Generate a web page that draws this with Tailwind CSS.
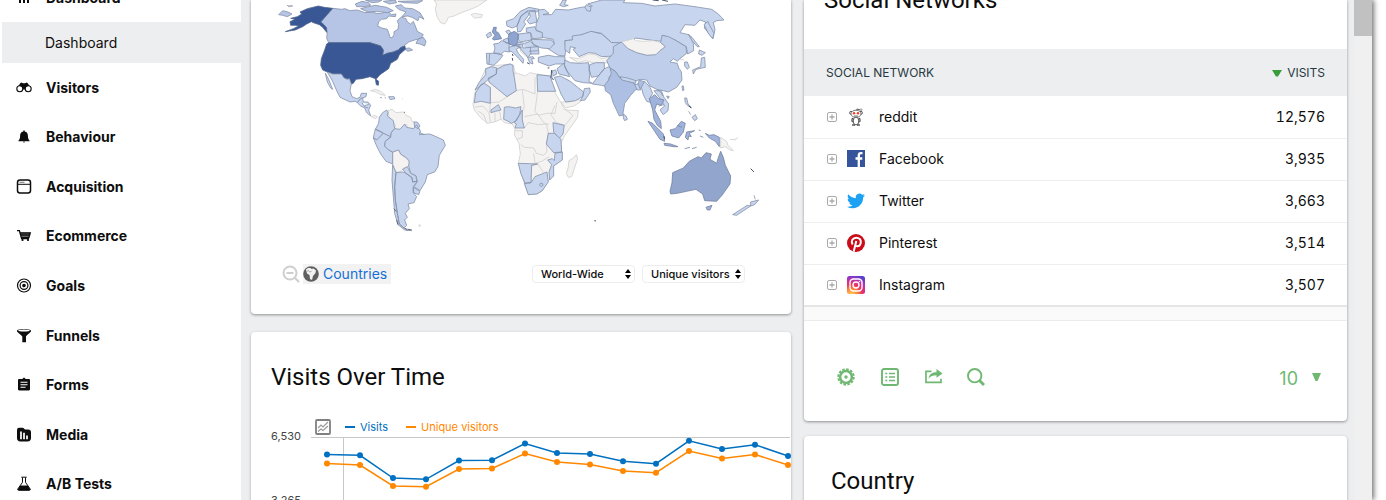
<!DOCTYPE html>
<html lang="en">
  <head>
    <meta charset="UTF-8" />
    <meta name="viewport" content="width=device-width, initial-scale=1" />
    <title>Dashboard - Web Analytics</title>
    <script src="https://cdn.jsdelivr.net/npm/@tailwindcss/browser@4"></script>
  </head>
  <body class="h-screen overflow-hidden bg-white pr-[14px] font-['Inter','Liberation_Sans',sans-serif] text-[#0d0d0d]">
    <div class="flex h-full bg-[#edeef0] shadow-[2px_0_5px_rgba(0,0,0,0.55)]">
      <!-- Sidebar -->
      <aside class="w-[241px] shrink-0 overflow-hidden bg-white">
        <nav class="-mt-[27px] text-sm font-bold" aria-label="Main">
          <a href="#" class="flex h-[49px] items-center gap-[14px] pl-4">
            <svg class="size-4" viewBox="0 0 16 16" fill="currentColor"><path d="M3 6h2v7H3zM7 3h2v10H7zM11 6h2v7h-2z" /></svg>
            Dashboard
          </a>
          <a href="#" class="ml-[2px] flex h-[41px] items-center bg-[#edeef0] pl-[43px] font-normal">Dashboard</a>
          <div class="grid h-[446px] auto-rows-fr">
            <a href="#" class="flex items-center gap-[14px] pl-4">
              <svg class="size-4" viewBox="0 0 16 16"><path d="M2.300 6.500 4 3.500 5.200 2.600 7 3.200h2l1.800-.6L12 3.500l1.700 3-3.200 3H5.500z" fill="#0d0d0d" /><g fill="#fff" stroke="#0d0d0d" stroke-width="1.100"><circle cx="3.800" cy="8.700" r="3" /><circle cx="12.200" cy="8.700" r="3" /></g><path d="M3.200 5.500 5 4l3 3.200L11 4l1.800 1.500-3.500 1.800L8.600 9H7.400l-.7-1.700z" fill="#0d0d0d" /></svg>
              Visitors
            </a>
            <a href="#" class="flex items-center gap-[14px] pl-4">
              <svg class="size-4" viewBox="0 0 16 16" fill="currentColor"><path d="M7.300 1.500h1.400v1c2.300.5 3.200 2.200 3.200 4.300 0 2.500.6 3.700 1.600 4.700v.8h-11v-.8c1-1 1.600-2.200 1.600-4.700 0-2.100.9-3.800 3.200-4.300zM6.800 12.800h2.400c-.2 1-2.200 1-2.400 0z" /></svg>
              Behaviour
            </a>
            <a href="#" class="flex items-center gap-[14px] pl-4">
              <svg class="size-4" viewBox="0 0 16 16" fill="none" stroke="currentColor"><rect x="1.500" y="1" width="13" height="13" rx="2.500" stroke-width="1.500" /><path d="M2 5.300h12" stroke-width="1" /><path d="M3.500 3.300h5" stroke="#888" stroke-width="1.200" /></svg>
              Acquisition
            </a>
            <a href="#" class="flex items-center gap-[14px] pl-4">
              <svg class="size-4" viewBox="0 0 16 16"><path d="M4.200 4.500H14l-1.200 5H5.500z" fill="#8a8a8a" /><path d="M1 2.700h2.400l2.200 7.800H13M4.300 5h10l-1.400 4.500H5.300M5 7h8.500" fill="none" stroke="#0d0d0d" stroke-width="1.300" /><circle cx="6.500" cy="12" r="1.100" /><circle cx="12" cy="12" r="1.100" /></svg>
              Ecommerce
            </a>
            <a href="#" class="flex items-center gap-[14px] pl-4">
              <svg class="size-4" viewBox="0 0 16 16" fill="none" stroke="currentColor" stroke-width="1.200"><circle cx="8" cy="7.500" r="6.500" /><circle cx="8" cy="7.500" r="3.900" /><circle cx="8" cy="7.500" r="1.200" fill="currentColor" /></svg>
              Goals
            </a>
            <a href="#" class="flex items-center gap-[14px] pl-4">
              <svg class="size-4" viewBox="0 0 16 16"><path d="M.9 2.700C1 .3 15 .3 15.100 2.700c0 1.700-4 4-5.100 5.800v5.800H6.300V8.500C5 6.700.9 4.400.9 2.700z" fill="#0d0d0d" /><ellipse cx="8" cy="2.600" rx="5.700" ry="1" fill="#fff" /></svg>
              Funnels
            </a>
            <a href="#" class="flex items-center gap-[14px] pl-4">
              <svg class="size-4" viewBox="0 0 16 16"><path d="M3.200 2h3L8 .6 9.800 2h3c.7 0 1.200.5 1.200 1.200v9c0 .7-.5 1.200-1.200 1.200H3.200c-.7 0-1.200-.5-1.200-1.200v-9C2 2.500 2.500 2 3.200 2z" fill="#0d0d0d" /><path d="M4.500 5.200h7M4.500 7.700h7M4.500 10.200h5" stroke="#fff" stroke-width="1.100" /></svg>
              Forms
            </a>
            <a href="#" class="flex items-center gap-[14px] pl-4">
              <svg class="size-4" viewBox="0 0 16 16"><path d="M3 .8h3.500c1.500 0 1.500 1.700 3 1.700H12c2.200 0 3 1.300 3 3v5.500c0 2.300-1.200 3.500-3.500 3.500h-7C2.200 14.500 1 13.300 1 11V4C1 2 1.500.8 3 .8z" fill="#0d0d0d" /><path d="M5 4.500v7.800M8 5.800v6.500M11 8.500v3.800" stroke="#fff" stroke-width="1.700" /></svg>
              Media
            </a>
            <a href="#" class="flex items-center gap-[14px] pl-4">
              <svg class="size-4" viewBox="0 0 16 16"><path d="M5.300 1.200h5.400M6.500 1.500v4.800L1.800 13c-.4.900.1 1.300.9 1.300h10.600c.8 0 1.300-.4.900-1.300L9.500 6.300V1.500" fill="none" stroke="#0d0d0d" /><path d="M4.300 9.500h7.400l2.500 3.800-.6 1H2.400l-.6-1z" fill="#0d0d0d" /></svg>
              A/B Tests
            </a>
          </div>
        </nav>
      </aside>

      <!-- Widgets -->
      <main class="grid min-w-0 flex-1 grid-cols-[540fr_543fr] items-start gap-[13px] pr-[7px] pl-[10px]">
        <div class="flex flex-col gap-[18px]">
          <section class="rounded-b-sm bg-white pb-[31px] shadow-[0_1px_3px_rgba(0,0,0,0.4)]">
            <svg class="block w-full" viewBox="251 0 540 240" role="img" aria-label="Visitor map" stroke-linejoin="round">
              <!-- Americas -->
              <g transform="translate(270 0) scale(.3333)" stroke="#8490a8" stroke-width="2.400" fill="#c8d5ee">
                <g fill="#f4f3f2" stroke="#cfcfcf">
                  <path d="M492 0l8 12-4 16 6 24 10 16 12 4 6-8 5-12 18-4 12-6 20-8 22-8 18-8 26-18z" />
                  <path d="M354 332l12-4 12 10 22-2 8 10 14 6 4 12 12 4 2 16-12 2-12 2-6-14-8 2-8 16-20 2 2-20-18-14zM368 456l18-6 6 14 18 12 8 10-2 14-16 4-8 12-14 0-10-24z" />
                  <path d="M302 272l14-4 16 6 14 12-14-2-14-8zM304 350l8-4 10 4-4 6-6-2zM448 674l4 2-2 4-4-2zM396 296l3 1" />
                </g>
                <g fill="#b6c5e5">
                  <path d="M188 25L215 28 225 26 240 32 262 30 285 38 310 36 318 40 335 40 344 35 356 35 364 44 378 42 376 50 356 48 350 56 334 58 326 66 323 78 335 84 352 88 356 98 360 112 366 114 372 104 372 95 384 88 386 74 382 62 394 51 408 56 412 66 422 72 430 64 436 78 442 94 460 104 452 116 434 120 416 126 402 138 385 150 368 156 352 160 338 166 340 150 332 138 300 128 176 128 170 115 172 95 152 66z" />
                  <path d="M256 12l20-8 20 4 6 8-20 4-22 0zM272 26l24-6 20-4 34 6 20 10-18 6-30-4-28 2zM286 0l20 8 20-2 10-6zM340 4l18 8 22-4-4-8zM376 18l18-4 10 10 24 2 22 12 12 20-14-8-4 12-18-10-12-4-18 2 12-14-22-8zM384 4l20 4 38 2 16-8zM440 126l6-10 14-4 8 12-4 14-14-6-12-2zM402 146l16-2 10 6-14 4zM26 44l12-12 16 4 12 6-14 8-14-4z" />
                </g>
                <g fill="#385794" stroke="#52678f">
                  <path d="M60 65L75 58 62 55 82 50 95 42 90 36 112 26 145 18 163 22 188 25 152 66 162 74 170 84 170 97 158 82 148 74 130 68 124 65 110 72 98 80 76 90 46 95 70 86 86 78 76 76 62 76z" />
                  <path d="M176 128L300 128 332 138 340 150 338 166 352 160 370 156 385 150 393 142 405 138 406 148 388 164 382 178 362 190 356 206 330 224 318 238 326 244 325 256 319 254 316 236 300 230 276 236 258 238 250 250 244 252 238 236 232 238 222 234 214 222 188 222 172 216 158 210 152 196 154 176 164 150 170 132z" />
                </g>
                <path d="M172 216L188 222 214 222 222 234 232 238 238 236 244 252 240 272 246 290 260 296 270 292 274 280 290 280 288 290 272 296 262 308 256 304 240 306 210 292 202 276 186 240zM166 220l10 18 12 30-6-4-10-18z" />
                <path d="M262 308l10-12 6-2 2 12 14 0 8 10-6 14 6 18-12-10-6-14-12-6zM276 308l6 10 16-6M282 320l12 4M330 292l6 2M356 290h16l3 6-14 3zM344 292l4 3" />
                <path d="M350 330l4 8-2 10 18 14 4 24-10 12-2 14-22-12-10-6-14-6 10-18 2-18 10-14zM316 388l14 6 10 6-12 12-8 8-10-8z" />
                <path d="M310 414l10 6 8-8 12-12 22 10-16 14-2 14 12 12 12 6v36l-20-8-16-22-14-28z" />
                <path d="M364 398L374 386 390 388 404 372 410 382 430 386 440 374 452 394 448 404 480 402 494 408 520 420 526 436 508 466 504 500 494 516 472 524 466 546 450 572 432 560 442 544 438 528 422 520 416 498 418 484 410 474 392 462 386 450 368 456 356 450 344 438 346 424 362 412zM432 366h10l8 12-6 8-10-6zM448 398l16 6" />
                <path d="M398 508l14-8 10 20 16 8 2 16-12 2-2-14-18-12zM378 518L398 516 408 520 426 534 428 546 442 544 430 560 430 578 440 590 432 608 414 612 418 626 406 640 412 652 404 660 410 676 402 684 388 672 382 640 376 600 374 560zM368 494L378 518 374 560 376 600 382 640 388 672 402 684 424 692 404 690 384 674 374 640 370 590 366 540zM430 562l20 12-4 10-16-6z" />
                <path d="M58 18l10 0M52 16l6 4M402 336l3 2M380 660l4 14M372 626l6 8M404 684l8 8M414 688l12 2" stroke="#46526c" />
              </g>

              <!-- Europe, Africa, Middle East -->
              <g transform="translate(455 0) scale(.3333)" stroke="#8490a8" stroke-width="2.400" fill="#c8d5ee">
                <g fill="#f4f3f2" stroke="#cfcfcf">
                  <path d="M48 44l10-4 24 4-2 8-22 2zM92 206L110 198 166 192 176 196 180 218 212 228 224 218 246 222 286 228 290 250 300 278 318 308 330 330 370 332 368 352 345 384 328 408 318 430 322 478 296 498 294 528 276 548 262 572 246 582 220 584 208 550 190 490 196 462 192 430 178 404 180 388 172 372 148 368 138 358 118 366 96 370 74 350 58 330 54 312 60 276z" />
                  <path d="M364 464l4 12-10 30-8 24-10 2-6-12 6-18 2-20 14-8zM318 306l24 0 30-8 4 8-20 12-24 6-10-12zM344 172l26 4 30-14 20 2 20 12 30-6 10 8-20 10-40 2-30-8-20 6zM196 144l26 20-8 6-18-16z" />
                  <path fill="none" d="M176 230l4-12M106 262v46l26-2 22-14 30-20 20-4 36 14v-50M202 270l6 50-4 12M248 274l-8 60 10 12 26-6 24 0 6-34M106 310l-2 28M58 322l26-4 18 20 4 28M70 334l16 10 10 26M120 338v28M134 334l4 26M208 350l40-8 18 26 16 6M208 384l12-16 30 6 24-2 6 28-6 32 2 24-10 10-22-6-8-16-28-2-10-8M180 392l22 0 0 20-16 6M236 460l4 30 20-6 22-14M228 548l0-50 20-6 18 26M300 316l-12 28 16 24 26 8 24-30-26-20" />
                </g>
                <!-- Russia and Kazakhstan -->
                <path d="M250 30l18-2 14 12-18 4 26 0 12-16 38 2 38-8 34-4-14-6 42-12h70l-5 8 55 2 40 8 60-6 60 8 50 8 20 14 17 18-22 2-10 6 5 20-6 28-14-18-12-14 4-18-17-6-15 16-30-2-15 24 27 6 13 26 1 22-18 10-4-22-34-20-35-14-5 18-20-2-60-8-5 10-35 6-30-2-30-28-30-5-35 11-25 14-20 2 2 28-2 18-20-2-25-16-15-10 28-8-3-14-33-6-4-16-16-6 2-20 8-20z" />
                <path d="M330 122l22-2 0-12 28-4 28-10 32 8 30 26 26 0-16 18-2 22-38 2-20-10-20-2-28 12-18-22 8-4-16-4-2 20-14-10zM456 184l30-16 14 20-26 8z" />
                <path d="M314 16l10-16 10 0-6 14 12 2-14 4zM390 22l4-8 14 8-2 12-10-2z" />
                <!-- Nordics and continental Europe -->
                <path d="M154 64l22-8 20-22 26-12 30 6-6 8-28-4-20 16-12 30-14 6-16-6zM186 78l12-30 20-14 4 10-16 22 6 6-14 22-10 2zM222 34l18-4 6 36-22 6-8-10 10-12zM152 94l10-4 6 8-8 6zM214 84l26-4 4 12 18 6 0 16-30 2-4-16-14-4z" />
                <path d="M94 104l12-8 4 10-12 8zM116 132l14-2 10-8 22 8 2 26-16-2-12 10-20-6 4-14zM94 160l36 0 14 6-14 18-14 12-20-4zM104 162l-2 30M144 120l14-6 6 14-10 2z" />
                <path d="M190 102l36-4 4 22-34 6-6-8zM228 118l62 2 8 12-14 14-24-2-24-8zM162 142l26-8 8 6-12 8 6 12 16 18-2 12-12-14-20-20-10-4zM188 126l20 4 18-6 12 10 12 6 2 22-26 0-6 10 14-2 4 6-8 0 4 16-10-4-8-20-24-26-10-10zM202 132l2 12 22-2 2 22M176 132l24 2M180 136l20 8M224 142l24-2M222 154l28-2" />
                <path d="M250 172l30-6 22 4 28 0 0 22-28 0-20 6-32-12z" />
                <!-- Middle East and South Asia -->
                <path d="M306 206l20-16 18 40-32-8zM292 212l10-2 4 12-12 6zM298 232l18-4 30 16 22 18 18 14-4 14-20 12-30 4-14-24zM388 266l16-2 2 12-16 24-14 2 8-14zM330 180l16 8 26 2 28-2 5 30-3 26 10 6-27-2-25-6-25-30-7-14zM404 194l18-6 26 0 0 18-18 22-20 4-8-20zM430 228l18-22 24-10 6 18-16 18-2 30-20-6-28-4z" />
                <!-- Africa -->
                <path d="M92 206l18-6 16 4-2 18-24 16-16 14-24 18 12-22 20-24zM78 254l10-4 18 12v48l-28-6-20 4 4-30zM124 208l24-12 18-4 8 4 0 16 4 20 6 40-28 18-54-44-2-12 24-12zM246 224l40 4 4 14 12 32h-54z" />
                <path d="M148 322l12-2 22 4 16-4-4 24-10 18-14 8-14-8-10-4zM194 344l8-14 0 30 6 24h-28l4-12-6-4zM108 330l22-16 8 16-16 4-14 4zM294 368l34 8-4 26-12 14-16-20z" />
                <path d="M280 400l18 0 20 18 2 38-24 2-22-26zM300 460l22-4v24l-26 18v30l-12 12-2-24 8-22-12-14 14-4 6 6zM190 490l58 2-18 4-2 52-18 2-12-28zM208 550l20-2 12-18 36-14 4 30-18 26-16 10-26 2z" />
                <path d="M256 550l6 0 2 6-6 4-4-4z" />
                <g fill="#8fa4cf" stroke="#6b7da3">
                  <path d="M116 82l8 0-2 12 8 4 10 18-24 4-4-4 8-10-8-10zM162 102l16-8 12 8-2 26-10 10-16-6-2-20z" />
                </g>
                <path d="M172 162l2 6M172 174l1 8M278 204l5 0M290 210l-2 22 8 8M216 188l8 4M418 662l5 1" stroke="#46526c" stroke-width="3" />
              </g>

              <!-- East Asia and Oceania -->
              <g transform="translate(600 0) scale(.3333)" stroke="#8490a8" stroke-width="2.400" fill="#c8d5ee">
                <path d="M64 126l36-10 8 6 20 2 32-2 24 6 12 12-16 12-12 14-28 0-30-8-26-12z" fill="#f4f3f2" stroke="#cfcfcf" />
                <path d="M362 412l18 12 4 12 16 16-10-2-14-10-14 4zM390 418l16 2 8-8M240 180l12-2" fill="#f4f3f2" stroke="#cfcfcf" />
                <path d="M64 126L84 146 110 158 140 166 168 164 180 152 196 140 182 128 186 106 206 110 225 120 258 140 260 160 240 176 232 184 220 176 210 186 232 190 236 204 244 215 246 240 230 262 205 276 190 272 170 268 150 258 140 240 120 238 100 246 60 234 46 214 30 204 20 182 40 160 40 140z" fill="#bfcfeb" />
                <path d="M30 204l16 10 14 20 44 16 6 12 8-22 16 6-10 18-18 6-14 16-18 24-6 36-10 2-18-38-8-26-16-12-2-16 12-16 8-20z" fill="#adbfe3" />
                <path d="M60 230l22 4 26 8-2 8-40-10zM104 254l10-2 8 18-10 0zM70 342l8 6 4 10-8 4-4-8zM124 262l10-18 16 18 8 18-10 16 6 12-14-4-10-20z" />
                <path d="M162 272l22 0 8 20 14 20-2 20-14 12-10-14 14-12-18-28zM170 268l14 10 4 10M176 318l16-4M246 258l4 0 2 12-4 2zM200 288l8 2-4 6zM254 186l8 0 6 16-6 6-8-10zM312 74l12-10 4 10 14 26-4 16-12-14zM266 104l10 8 22 28-6 0-16-18zM298 150l18 8-10 8-10-4zM304 174l10-2 2 30-28 6-8 14-2-12 24-10z" />
                <path d="M254 294l6 0 4 18 10 10-12-6-6-8zM276 352l10-8 6 12-8 6zM266 334l6 10M452 606l24-6-12 14-12 4zM398 644l44-28 10 2-42 28zM462 586l4 12" />
                <g fill="#9fb3dc" stroke="#73829f">
                  <path d="M148 296l16-12 12 12 16 4-8 16-14-4-6 18 18 34 2 22-12-10-10-18-4-28zM144 364l14 6 32 32 4 22-14-6-20-30zM192 430l20 2 22 8-12 0-28-4zM210 390l16-4 18-22 12 6-6 26-14 18-20-6zM232 376l14 6M260 396l24-4-16 8 6 10-8-2-2 12-8-8zM316 400l12 6 14-2 16 8v28l-12-16-18-10zM254 446l16-4M276 446l14-4M296 390l6 2M300 408l10 4M318 622l18-6-6 14-8 0z" />
                </g>
                <path d="M212 582L210 574 216 548 218 518 250 504 268 484 294 470 304 474 318 458 334 462 330 478 350 490 354 476 362 454 370 472 376 496 392 528 390 552 366 586 350 604 314 602 308 582 296 574 288 568 260 574 232 580z" fill="#91a5cd" stroke="#73829f" />
                <path d="M452 506l10 10M158 0l18 2M186 0l18 4M266 318l8 6M192 408l2 10" stroke="#46526c" stroke-width="3" />
              </g>
            </svg>

            <div class="mt-[25px] flex h-[18px] items-center pr-[46px] pl-[31px]">
              <button type="button" aria-label="Zoom out">
                <svg class="size-[18px]" viewBox="0 0 18 18" fill="none" stroke="#cfcfcf"><circle cx="8" cy="8" r="6.500" stroke-width="2" /><path d="M4.500 8h7M13 13l4 4" stroke-width="2.200" /></svg>
              </button>
              <a href="#" class="ml-[3px] flex items-center gap-1 bg-[#f2f2f2] pr-1 text-sm text-[#1570d6]">
                <svg class="size-4" viewBox="0 0 16 16"><circle cx="8" cy="8" r="7.800" fill="#5f5f5f" /><path d="M3 3.500C5 1.500 8 1.800 8.500 3l2-.5 2.500 2-.5 2.500-2.500 3-1 4-2-1-.5-4L4 7.500z" fill="#f2f2f2" /><path d="M3.500 5.500l2-1 1 1.500 2-.5" stroke="#aaa" fill="none" /></svg>
                Countries
              </a>
              <div class="ml-auto flex gap-[7px] text-[11px] font-medium">
                <label class="relative block">
                  <select aria-label="Region" class="h-[18px] w-[103px] appearance-none rounded border border-[#ededed] bg-white pl-2 leading-none">
                    <option>World-Wide</option>
                  </select>
                  <svg class="pointer-events-none absolute top-[4px] right-[4px] h-[10px] w-[6px]" viewBox="0 0 6 10"><path d="M3 0l3 4H0zM3 10L0 6h6z" /></svg>
                </label>
                <label class="relative block">
                  <select aria-label="Metric" class="h-[18px] w-[103px] appearance-none rounded border border-[#ededed] bg-white pl-2 leading-none">
                    <option>Unique visitors</option>
                  </select>
                  <svg class="pointer-events-none absolute top-[4px] right-[4px] h-[10px] w-[6px]" viewBox="0 0 6 10"><path d="M3 0l3 4H0zM3 10L0 6h6z" /></svg>
                </label>
              </div>
            </div>
          </section>

          <section class="rounded-sm bg-white pt-[29px] shadow-[0_1px_3px_rgba(0,0,0,0.3)]">
            <h2 class="pl-5 font-['Roboto','Liberation_Sans',sans-serif] text-2xl leading-8">Visits Over Time</h2>
            <div class="mt-[26px] flex h-4 items-center pl-[64px] text-[11px]">
              <button type="button" aria-label="Select metrics">
                <svg class="size-4" viewBox="0 0 16 16" fill="none"><rect x="1" y="1" width="14" height="14" rx="1" stroke="#808080" stroke-width="1.800" /><path d="M3 9l3-3 2 2 5-5M3 12.500L6 10l2 1.500 5-4.500" stroke="#999" stroke-width="1.200" /></svg>
              </button>
              <span class="ml-[14px] h-[2px] w-[10px] bg-[#0070c0]"></span>
              <span class="ml-[5px] text-[#0070c0]">Visits</span>
              <span class="ml-[18px] h-[2px] w-[10px] bg-[#ff8800]"></span>
              <span class="ml-[5px] text-[#ff8800]">Unique visitors</span>
            </div>
            <svg class="block w-full overflow-visible" viewBox="251 435 540 75" font-size="11" fill="#444" role="img" aria-label="Visits and unique visitors over time">
              <path d="M311 437.500H790M343.500 437.500V510" stroke="#c8c8c8" />
              <text x="301" y="440" text-anchor="end">6,530</text>
              <text x="301" y="504" text-anchor="end">3,265</text>
              <g id="visit-series" fill="none" stroke-width="1.500"></g>
            </svg>
          </section>
        </div>

        <div class="flex flex-col gap-[15px]">
          <section class="rounded-b-sm bg-white shadow-[0_1px_3px_rgba(0,0,0,0.4)]">
            <h2 class="-mt-4 pl-5 font-['Roboto','Liberation_Sans',sans-serif] text-2xl leading-8">Social Networks</h2>
            <table class="mt-[33px] w-full">
              <thead class="bg-[#edeef0] text-xs text-[#263840]">
                <tr class="h-[47px]">
                  <th class="pl-[22px] text-left font-normal">SOCIAL NETWORK</th>
                  <th class="pr-[22px] text-right font-normal">
                    <svg class="mr-[2px] inline h-[7px] w-[10px]" viewBox="0 0 10 7"><path d="M0 0h10L6 6.500H4z" fill="#3a9b3c" /></svg>
                    VISITS
                  </th>
                </tr>
              </thead>
              <tbody class="text-sm">
                <tr class="h-[42px] border-b border-[#eeeeee]">
                  <td class="pl-[23px]">
                    <div class="flex items-center">
                      <button type="button" aria-label="Expand reddit"><svg class="size-[10px]" viewBox="0 0 10 10" fill="none" stroke="#aaa"><rect x=".5" y=".5" width="9" height="9" rx="1.500" /><path d="M2.500 5h5M5 2.500v5" stroke-width="1.300" /></svg></button>
                      <svg class="mr-[14px] ml-[10px] size-[18px]" viewBox="0 0 18 18" fill="#fff" stroke="#555"><path d="M9 4l1-3 3 .8" fill="none" /><circle cx="14" cy="1.800" r="1" stroke="#999" /><circle cx="4" cy="4.800" r="1.400" /><circle cx="14" cy="4.800" r="1.400" /><ellipse cx="9" cy="5.800" rx="5" ry="3.600" stroke="#777" /><ellipse cx="9" cy="13" rx="2.800" ry="3.900" /><path d="M6 10c-1.500 1-1.300 3-.3 4.200M12 10c1.500 1 1.300 3 .3 4.200M5 17h3M10 17h3" fill="none" stroke-width="1.300" /><path d="M7 8h4" stroke-width=".8" /><g fill="#f33b24" stroke="none"><circle cx="7" cy="5.300" r="1.200" /><circle cx="11" cy="5.300" r="1.200" /></g></svg>
                      reddit
                    </div>
                  </td>
                  <td class="pr-[22px] text-right tabular-nums">12,576</td>
                </tr>
                <tr class="h-[42px] border-b border-[#eeeeee]">
                  <td class="pl-[23px]">
                    <div class="flex items-center">
                      <button type="button" aria-label="Expand Facebook"><svg class="size-[10px]" viewBox="0 0 10 10" fill="none" stroke="#aaa"><rect x=".5" y=".5" width="9" height="9" rx="1.500" /><path d="M2.500 5h5M5 2.500v5" stroke-width="1.300" /></svg></button>
                      <svg class="mr-[14px] ml-[10px] size-[18px]" viewBox="0 0 18 18"><path d="M0 0h18v17H0z" fill="#35549b" /><path d="M15.500 3.200h-1.500C12.300 3.200 11.800 4 11.800 5.500V17M8.500 8.500h6.800" stroke="#fff" stroke-width="2.300" fill="none" /></svg>
                      Facebook
                    </div>
                  </td>
                  <td class="pr-[22px] text-right tabular-nums">3,935</td>
                </tr>
                <tr class="h-[42px] border-b border-[#eeeeee]">
                  <td class="pl-[23px]">
                    <div class="flex items-center">
                      <button type="button" aria-label="Expand Twitter"><svg class="size-[10px]" viewBox="0 0 10 10" fill="none" stroke="#aaa"><rect x=".5" y=".5" width="9" height="9" rx="1.500" /><path d="M2.500 5h5M5 2.500v5" stroke-width="1.300" /></svg></button>
                      <svg class="mr-[14px] ml-[10px] size-[18px]" viewBox="0 0 24 24"><path d="M23.950 4.570a10 10 0 0 1-2.820.77 4.960 4.960 0 0 0 2.160-2.720c-.95.55-2 .95-3.130 1.180a4.920 4.920 0 0 0-8.380 4.480C7.690 8.090 4.070 6.130 1.640 3.160a4.820 4.820 0 0 0-.67 2.480c0 1.710.87 3.210 2.190 4.100a4.900 4.900 0 0 1-2.230-.62v.06a4.920 4.920 0 0 0 3.950 4.830 5 5 0 0 1-2.210.08 4.940 4.940 0 0 0 4.600 3.420A9.870 9.870 0 0 1 0 19.540a14 14 0 0 0 7.550 2.210c9.050 0 14-7.500 14-13.980 0-.21 0-.42-.02-.63a9.940 9.940 0 0 0 2.460-2.550z" fill="#1da1f2" /></svg>
                      Twitter
                    </div>
                  </td>
                  <td class="pr-[22px] text-right tabular-nums">3,663</td>
                </tr>
                <tr class="h-[42px] border-b border-[#eeeeee]">
                  <td class="pl-[23px]">
                    <div class="flex items-center">
                      <button type="button" aria-label="Expand Pinterest"><svg class="size-[10px]" viewBox="0 0 10 10" fill="none" stroke="#aaa"><rect x=".5" y=".5" width="9" height="9" rx="1.500" /><path d="M2.500 5h5M5 2.500v5" stroke-width="1.300" /></svg></button>
                      <svg class="mr-[14px] ml-[10px] size-[18px]" viewBox="0 0 18 18"><circle cx="9" cy="9" r="9" fill="#cb0c1a" /><path d="M5.600 10.500C3.500 7 5.800 3.800 9.300 3.800c3 0 4.700 1.900 4.500 4.300-.2 2.500-1.700 4.200-3.500 4.200-1.200 0-1.800-.6-2-1.300M9.300 7l-2.600 10.500" fill="none" stroke="#fff" stroke-width="2" /></svg>
                      Pinterest
                    </div>
                  </td>
                  <td class="pr-[22px] text-right tabular-nums">3,514</td>
                </tr>
                <tr class="h-[42px] border-b-2 border-[#e6e6e6]">
                  <td class="pl-[23px]">
                    <div class="flex items-center">
                      <button type="button" aria-label="Expand Instagram"><svg class="size-[10px]" viewBox="0 0 10 10" fill="none" stroke="#aaa"><rect x=".5" y=".5" width="9" height="9" rx="1.500" /><path d="M2.500 5h5M5 2.500v5" stroke-width="1.300" /></svg></button>
                      <svg class="mr-[14px] ml-[10px] size-[18px]" viewBox="0 0 18 18">
                        <defs>
                          <radialGradient id="insta" cx=".25" cy="1.050" r="1.100"><stop offset="0" stop-color="#ffd14d" /><stop offset=".3" stop-color="#fb8a3c" /><stop offset=".55" stop-color="#ee2f62" /><stop offset=".8" stop-color="#b930b4" /><stop offset="1" stop-color="#5a3fd0" /></radialGradient>
                        </defs>
                        <rect width="18" height="18" rx="2.500" fill="url(#insta)" /><g fill="none" stroke="#fff" stroke-width="1.400"><rect x="3" y="3" width="12" height="12" rx="3.500" /><circle cx="9" cy="9" r="3" /></g><circle cx="12.500" cy="5.500" r=".8" fill="#fff" />
                      </svg>
                      Instagram
                    </div>
                  </td>
                  <td class="pr-[22px] text-right tabular-nums">3,507</td>
                </tr>
              </tbody>
            </table>
            <div class="h-[14px] border-b border-[#ececec] bg-[#fafafa]"></div>
            <div class="flex h-[100px] items-center gap-[26px] pt-3 pr-[26px] pl-[33px] text-[#6fb872]">
              <button type="button" aria-label="Settings">
                <svg class="size-[18px]" viewBox="0 0 18 18" fill="none" stroke="currentColor"><circle cx="9" cy="9" r="7.700" stroke-width="2" stroke-dasharray="2.500 1.530" /><circle cx="9" cy="9" r="5.900" stroke-width="2.500" /><circle cx="9" cy="9" r="1.700" fill="currentColor" stroke="none" /></svg>
              </button>
              <button type="button" aria-label="Table view">
                <svg class="size-[18px]" viewBox="0 0 18 18" fill="none" stroke="currentColor"><rect x="1" y="1" width="16" height="16" rx="2" stroke-width="1.900" /><path d="M4.300 5.500h2M4.300 9h2M4.300 12.500h2M8 5.500h6M8 9h6M8 12.500h6" stroke-width="1.700" /></svg>
              </button>
              <button type="button" aria-label="Export">
                <svg class="size-[18px]" viewBox="0 0 18 18"><path d="M6.500 3.300H1V14.300h15v-3.500" fill="none" stroke="currentColor" stroke-width="1.700" /><path d="M3.500 10.500c.5-4.500 4-6.300 8-6.300V1l6 4.500-6 4.300V7.300c-3.500 0-6 .7-8 3.200z" fill="currentColor" /></svg>
              </button>
              <button type="button" aria-label="Search" class="-ml-[2px]">
                <svg class="size-[18px]" viewBox="0 0 18 18" fill="none" stroke="currentColor"><circle cx="7.700" cy="7.700" r="6.700" stroke-width="1.900" /><path d="M12.500 12.500l4.500 4.500" stroke-width="2.800" /></svg>
              </button>
              <button type="button" class="ml-auto flex items-center gap-[14px] pt-1 text-lg leading-6">
                10
                <svg class="mb-1 h-[8px] w-[9px]" viewBox="0 0 9 8"><path d="M0 0h9L5.500 8h-2z" fill="currentColor" /></svg>
              </button>
            </div>
          </section>

          <section class="rounded-sm bg-white pt-[29px] pb-10 shadow-[0_1px_3px_rgba(0,0,0,0.3)]">
            <h2 class="pl-[27px] font-['Roboto','Liberation_Sans',sans-serif] text-2xl leading-8">Country</h2>
          </section>
        </div>
      </main>

      <!-- Scrollbar -->
      <div class="w-[18px] shrink-0 bg-[#f0f0f0]">
        <div class="h-9 bg-[#c1c1c1]"></div>
      </div>
    </div>

    <script>
      const xs = [327, 360, 393, 426, 459, 492, 525, 557, 590, 623, 656, 689, 722, 755, 788];
      const series = [
        { color: "#ff8800", ys: [463.5, 465, 486, 486.7, 469, 468.5, 453.5, 462, 464.5, 471, 472.7, 451, 458.5, 454.5, 465] },
        { color: "#0070c0", ys: [454.5, 455.3, 478, 479.3, 460.5, 460.2, 443.5, 453, 454, 461.3, 463.7, 440.8, 449, 444.7, 456] },
      ];

      document.getElementById("visit-series").innerHTML = series
        .map(({ color, ys }) => {
          const line = xs.map((x, i) => `${x},${ys[i]}`).join(" ");
          const dots = xs
            .map((x, i) => `<circle cx="${x}" cy="${ys[i]}" r="3" fill="${color}" stroke="none" />`)
            .join("");
          return `<polyline points="${line}" stroke="${color}" />${dots}`;
        })
        .join("");
    </script>
  </body>
</html>
